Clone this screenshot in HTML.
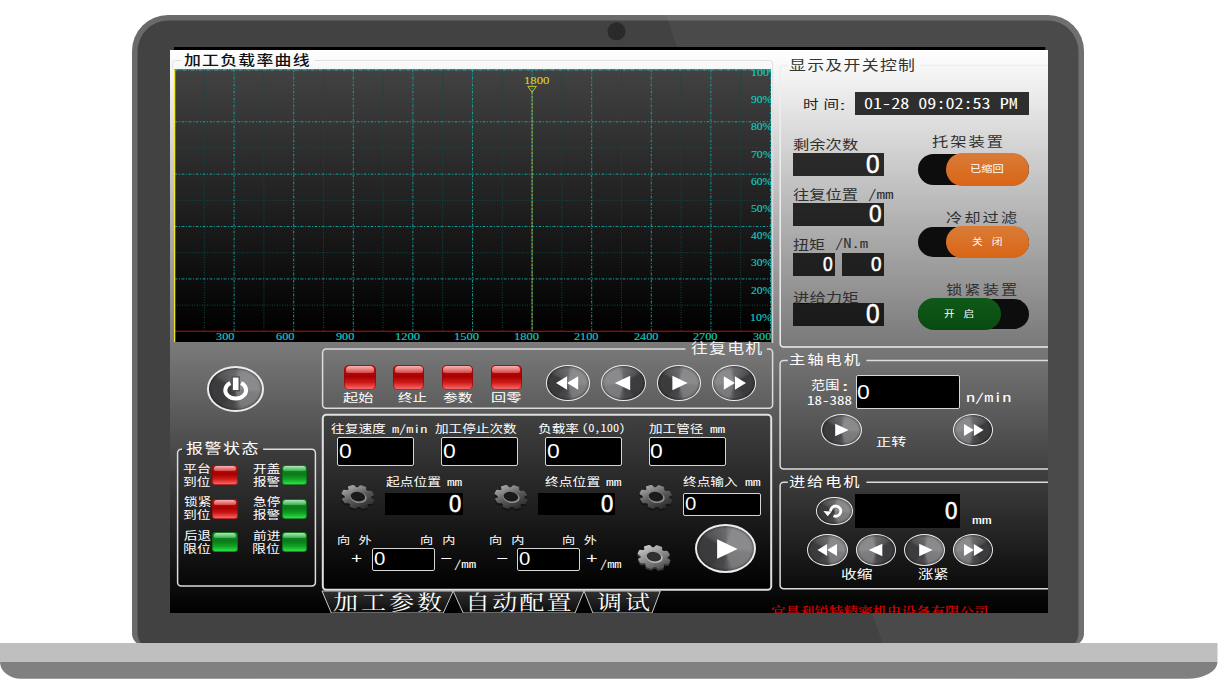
<!DOCTYPE html>
<html lang="zh-CN"><head><meta charset="utf-8"><title>加工负载率曲线 - 控制面板</title>
<style>
html,body{margin:0;padding:0;background:#fff;}
body{width:1218px;height:680px;position:relative;overflow:hidden;font-family:"Liberation Sans","Noto Sans CJK SC",sans-serif;}
.b{position:absolute;box-sizing:border-box;}
.t{position:absolute;white-space:pre;transform-origin:0 50%;}
#laptop{position:absolute;left:0;top:0;}
#screen{position:absolute;left:170px;top:50px;width:878px;height:562.5px;overflow:hidden;background:linear-gradient(#fff,#000);}
#in{position:absolute;left:-170px;top:-50px;width:1218px;height:680px;}
.grp{border:1.5px solid #dcdcdc;border-radius:4px;}
.inp{background:#000;border:1.8px solid #d6d6d6;border-radius:2px;}
.lcd{background:#000;}
.led{border-radius:5px;}
.red{background:linear-gradient(#cf2020 0,#b40606 30%,#a80000 46%,#cc1a1a 70%,#fa6464 95%,#e84848 100%);box-shadow:inset 0 0 0 0.8px rgba(140,10,10,.8);}
.grn{background:linear-gradient(#1f9a30 0,#0c8420 30%,#0a7a18 46%,#12a426 72%,#2ee048 95%,#22c03a 100%);box-shadow:inset 0 0 0 0.8px rgba(10,90,20,.8);}
.led:before{content:"";position:absolute;left:1.5px;right:1.5px;top:1px;height:25%;border-radius:4px 4px 2px 2px;}
.red:before{background:linear-gradient(rgba(255,205,205,.85),rgba(255,160,160,.42));}
.grn:before{background:linear-gradient(rgba(205,255,215,.8),rgba(150,240,170,.35));}
.rb{border-radius:50%;border:2px solid #ececec;}
.rbR{background:conic-gradient(from 0deg,#69696b 0deg,#7c7c7e 10deg,#8a8a8c 22deg,#8b8b8d 90deg,#7e7e80 102deg,#79797b 160deg,#5a5a5c 174deg,#48484a 188deg,#444446 212deg,#3b3b3d 224deg,#3c3c3e 296deg,#525254 308deg,#5e5e60 330deg,#69696b 360deg);box-shadow:inset 0 0 2.5px 0.5px rgba(0,0,0,.55);}
.rbL{background:conic-gradient(from 0deg,#69696b 0deg,#5e5e60 30deg,#525254 52deg,#3c3c3e 64deg,#3b3b3d 136deg,#444446 148deg,#48484a 172deg,#5a5a5c 186deg,#79797b 200deg,#7e7e80 258deg,#8b8b8d 270deg,#8a8a8c 338deg,#7c7c7e 350deg,#69696b 360deg);box-shadow:inset 0 0 2.5px 0.5px rgba(0,0,0,.55);}
.tog{border-radius:17px;background:#0d0d0d;}
.knob{border-radius:17px;}
svg{position:absolute;overflow:visible;}
</style></head><body>

<svg id="laptop" width="1218" height="680" viewBox="0 0 1218 680">
<defs><clipPath id="lidclip"><path d="M132 633.500V51a36 36 0 0 1 36-36h880a36 36 0 0 1 36 36V633.500a12 12 0 0 1-12 12H144a12 12 0 0 1-12-12z"/></clipPath></defs>
<path d="M132 633.500V51a36 36 0 0 1 36-36h880a36 36 0 0 1 36 36V633.500a12 12 0 0 1-12 12H144a12 12 0 0 1-12-12z" fill="#6a6a6a"/>
<path d="M137.500 633.500V51.500a31 31 0 0 1 31-31h879a31 31 0 0 1 31 31V633.500a9 12 0 0 1-9 12H146.500a9 12 0 0 1-9-12z" fill="#424242"/>
<path d="M665.900 15L885.500 652H1090V0H665z" fill="#ffffff" fill-opacity="0.045" clip-path="url(#lidclip)"/>
<circle cx="616.5" cy="31.300" r="9" fill="#2a2a2a"/>
<rect x="174" y="47" width="871.300" height="4" fill="#000"/>
<path d="M0 643H1217.500V662H0z" fill="#bfbfbf"/>
<path d="M0 662H1217.500a30 16.700 0 0 1-30 16.700H21a21 16.700 0 0 1-21-16.700z" fill="#808080"/>
</svg>

<div id="screen"><div id="in">
<svg width="1218" height="680" viewBox="0 0 1218 680" style="left:0;top:0"><path d="M315 60.5H769.7A3 3 0 0 1 772.700 63.5V343M172.500 69V63.500A3 3 0 0 1 175.500 60.500H181" fill="none" stroke="#dde1e4" stroke-width="1"/></svg>
<svg width="1218" height="680" viewBox="0 0 1218 680" style="left:0;top:0"><defs><linearGradient id="cg" x1="0" y1="0" x2="0" y2="1"><stop offset="0" stop-color="#424242"/><stop offset="1" stop-color="#000"/></linearGradient><clipPath id="cc"><rect x="174.5" y="69.5" width="596.5" height="272.5"/></clipPath></defs><rect x="174" y="69.5" width="597.0" height="272.5" fill="#000"/><rect x="174" y="69.5" width="597.0" height="261.8" fill="url(#cg)"/><g clip-path="url(#cc)" fill="none" shape-rendering="auto"><path d="M204.30 69.5V331.3" stroke="#0a4c4c" stroke-width="1" stroke-dasharray="1 1.5"/><path d="M263.90 69.5V331.3" stroke="#0a4c4c" stroke-width="1" stroke-dasharray="1 1.5"/><path d="M323.50 69.5V331.3" stroke="#0a4c4c" stroke-width="1" stroke-dasharray="1 1.5"/><path d="M383.10 69.5V331.3" stroke="#0a4c4c" stroke-width="1" stroke-dasharray="1 1.5"/><path d="M442.70 69.5V331.3" stroke="#0a4c4c" stroke-width="1" stroke-dasharray="1 1.5"/><path d="M502.30 69.5V331.3" stroke="#0a4c4c" stroke-width="1" stroke-dasharray="1 1.5"/><path d="M561.90 69.5V331.3" stroke="#0a4c4c" stroke-width="1" stroke-dasharray="1 1.5"/><path d="M621.50 69.5V331.3" stroke="#0a4c4c" stroke-width="1" stroke-dasharray="1 1.5"/><path d="M681.10 69.5V331.3" stroke="#0a4c4c" stroke-width="1" stroke-dasharray="1 1.5"/><path d="M740.70 69.5V331.3" stroke="#0a4c4c" stroke-width="1" stroke-dasharray="1 1.5"/><path d="M174.5 305.11H771.0" stroke="#0a4c4c" stroke-width="1" stroke-dasharray="1 1.5"/><path d="M174.5 252.73H771.0" stroke="#0a4c4c" stroke-width="1" stroke-dasharray="1 1.5"/><path d="M174.5 200.35H771.0" stroke="#0a4c4c" stroke-width="1" stroke-dasharray="1 1.5"/><path d="M174.5 147.97H771.0" stroke="#0a4c4c" stroke-width="1" stroke-dasharray="1 1.5"/><path d="M174.5 95.59H771.0" stroke="#0a4c4c" stroke-width="1" stroke-dasharray="1 1.5"/><path d="M234.10 69.5V333.8" stroke="#15a6a6" stroke-width="0.9" stroke-dasharray="3 1.5 1 1.5"/><path d="M293.70 69.5V333.8" stroke="#15a6a6" stroke-width="0.9" stroke-dasharray="3 1.5 1 1.5"/><path d="M353.30 69.5V333.8" stroke="#15a6a6" stroke-width="0.9" stroke-dasharray="3 1.5 1 1.5"/><path d="M412.90 69.5V333.8" stroke="#15a6a6" stroke-width="0.9" stroke-dasharray="3 1.5 1 1.5"/><path d="M472.50 69.5V333.8" stroke="#15a6a6" stroke-width="0.9" stroke-dasharray="3 1.5 1 1.5"/><path d="M532.10 69.5V333.8" stroke="#15a6a6" stroke-width="0.9" stroke-dasharray="3 1.5 1 1.5"/><path d="M591.70 69.5V333.8" stroke="#15a6a6" stroke-width="0.9" stroke-dasharray="3 1.5 1 1.5"/><path d="M651.30 69.5V333.8" stroke="#15a6a6" stroke-width="0.9" stroke-dasharray="3 1.5 1 1.5"/><path d="M710.90 69.5V333.8" stroke="#15a6a6" stroke-width="0.9" stroke-dasharray="3 1.5 1 1.5"/><path d="M770.50 69.5V333.8" stroke="#15a6a6" stroke-width="0.9" stroke-dasharray="3 1.5 1 1.5"/><path d="M174.5 278.92H771.0" stroke="#15a6a6" stroke-width="0.9" stroke-dasharray="3 1.5 1 1.5"/><path d="M174.5 226.54H771.0" stroke="#15a6a6" stroke-width="0.9" stroke-dasharray="3 1.5 1 1.5"/><path d="M174.5 174.16H771.0" stroke="#15a6a6" stroke-width="0.9" stroke-dasharray="3 1.5 1 1.5"/><path d="M174.5 121.78H771.0" stroke="#15a6a6" stroke-width="0.9" stroke-dasharray="3 1.5 1 1.5"/><path d="M174.5 69.40H771.0" stroke="#15a6a6" stroke-width="0.9" stroke-dasharray="3 1.5 1 1.5"/><path d="M174.5 69.8H771.0" stroke="#35e0e0" stroke-width="1" stroke-dasharray="4 1.5 1 1.5"/><path d="M532.10 92.5V331.3" stroke="#bcc630" stroke-width="1" stroke-dasharray="2 1.5"/><path d="M527.80 86.4H536.40L532.10 92.2z" stroke="#d8d020" stroke-width="0.9"/><path d="M174.5 331.3H771.0" stroke="#c60c0c" stroke-width="1.1"/></g><path d="M174.65 69.5V342.0" stroke="#f0e828" stroke-width="1.3"/></svg>
<div class="b" style="left:174.5px;top:69.5px;width:596.5px;height:272.5px;overflow:hidden"><div class="b" style="left:-174.5px;top:-69.5px;width:1218px;height:680px">
<div class="t" style="left:216.34px;top:330.54px;font:400 10px/12px 'Liberation Serif','Noto Serif CJK SC',serif;color:#10cfc0;transform:scaleX(1.228);-webkit-text-stroke:0.12px #10cfc0;">300</div>
<div class="t" style="left:275.94px;top:330.54px;font:400 10px/12px 'Liberation Serif','Noto Serif CJK SC',serif;color:#10cfc0;transform:scaleX(1.228);-webkit-text-stroke:0.12px #10cfc0;">600</div>
<div class="t" style="left:335.70px;top:330.54px;font:400 10px/12px 'Liberation Serif','Noto Serif CJK SC',serif;color:#10cfc0;transform:scaleX(1.217);-webkit-text-stroke:0.12px #10cfc0;">900</div>
<div class="t" style="left:394.50px;top:330.54px;font:400 10px/12px 'Liberation Serif','Noto Serif CJK SC',serif;color:#10cfc0;transform:scaleX(1.253);-webkit-text-stroke:0.12px #10cfc0;">1200</div>
<div class="t" style="left:454.10px;top:330.54px;font:400 10px/12px 'Liberation Serif','Noto Serif CJK SC',serif;color:#10cfc0;transform:scaleX(1.253);-webkit-text-stroke:0.12px #10cfc0;">1500</div>
<div class="t" style="left:513.70px;top:330.54px;font:400 10px/12px 'Liberation Serif','Noto Serif CJK SC',serif;color:#10cfc0;transform:scaleX(1.253);-webkit-text-stroke:0.12px #10cfc0;">1800</div>
<div class="t" style="left:573.94px;top:330.54px;font:400 10px/12px 'Liberation Serif','Noto Serif CJK SC',serif;color:#10cfc0;transform:scaleX(1.221);-webkit-text-stroke:0.12px #10cfc0;">2100</div>
<div class="t" style="left:633.54px;top:330.54px;font:400 10px/12px 'Liberation Serif','Noto Serif CJK SC',serif;color:#10cfc0;transform:scaleX(1.221);-webkit-text-stroke:0.12px #10cfc0;">2400</div>
<div class="t" style="left:693.14px;top:330.54px;font:400 10px/12px 'Liberation Serif','Noto Serif CJK SC',serif;color:#10cfc0;transform:scaleX(1.221);-webkit-text-stroke:0.12px #10cfc0;">2700</div>
<div class="t" style="left:752.74px;top:330.54px;font:400 10px/12px 'Liberation Serif','Noto Serif CJK SC',serif;color:#10cfc0;transform:scaleX(1.221);-webkit-text-stroke:0.12px #10cfc0;">3000</div>
<div class="t" style="left:750.26px;top:311.67px;font:400 10px/12px 'Liberation Serif','Noto Serif CJK SC',serif;color:#10cfc0;transform:scaleX(1.191);-webkit-text-stroke:0.12px #10cfc0;">10%</div>
<div class="t" style="left:750.87px;top:284.50px;font:400 10px/12px 'Liberation Serif','Noto Serif CJK SC',serif;color:#10cfc0;transform:scaleX(1.157);-webkit-text-stroke:0.12px #10cfc0;">20%</div>
<div class="t" style="left:750.87px;top:257.33px;font:400 10px/12px 'Liberation Serif','Noto Serif CJK SC',serif;color:#10cfc0;transform:scaleX(1.157);-webkit-text-stroke:0.12px #10cfc0;">30%</div>
<div class="t" style="left:751.16px;top:230.16px;font:400 10px/12px 'Liberation Serif','Noto Serif CJK SC',serif;color:#10cfc0;transform:scaleX(1.141);-webkit-text-stroke:0.12px #10cfc0;">40%</div>
<div class="t" style="left:750.72px;top:202.99px;font:400 10px/12px 'Liberation Serif','Noto Serif CJK SC',serif;color:#10cfc0;transform:scaleX(1.166);-webkit-text-stroke:0.12px #10cfc0;">50%</div>
<div class="t" style="left:750.87px;top:175.82px;font:400 10px/12px 'Liberation Serif','Noto Serif CJK SC',serif;color:#10cfc0;transform:scaleX(1.157);-webkit-text-stroke:0.12px #10cfc0;">60%</div>
<div class="t" style="left:750.57px;top:148.65px;font:400 10px/12px 'Liberation Serif','Noto Serif CJK SC',serif;color:#10cfc0;transform:scaleX(1.174);-webkit-text-stroke:0.12px #10cfc0;">70%</div>
<div class="t" style="left:750.87px;top:121.48px;font:400 10px/12px 'Liberation Serif','Noto Serif CJK SC',serif;color:#10cfc0;transform:scaleX(1.157);-webkit-text-stroke:0.12px #10cfc0;">80%</div>
<div class="t" style="left:751.01px;top:94.31px;font:400 10px/12px 'Liberation Serif','Noto Serif CJK SC',serif;color:#10cfc0;transform:scaleX(1.149);-webkit-text-stroke:0.12px #10cfc0;">90%</div>
<div class="t" style="left:750.95px;top:67.14px;font:400 10px/12px 'Liberation Serif','Noto Serif CJK SC',serif;color:#10cfc0;transform:scaleX(1.202);-webkit-text-stroke:0.12px #10cfc0;">100%</div>
<div class="t" style="left:523.54px;top:74.24px;font:400 10.5px/13px 'Liberation Serif','Noto Serif CJK SC',serif;color:#d8d020;transform:scaleX(1.210);-webkit-text-stroke:0.12px #d8d020;">1800</div>
</div></div>
<div class="t" style="left:184.19px;top:52.50px;font:500 13.5px/16px 'Liberation Sans','Noto Sans CJK SC',sans-serif;color:#111;transform:scaleX(1.250);letter-spacing:0.99px;">加工负载率曲线</div>
<svg width="1218" height="680" viewBox="0 0 1218 680" style="left:0;top:0"><path d="M920 65.5H1058.5A3.5 3.5 0 0 1 1062 69.0V343.5A3.5 3.5 0 0 1 1058.5 347H783.7A3.5 3.5 0 0 1 780.2 343.5V69.0A3.5 3.5 0 0 1 783.7 65.5H787" fill="none" stroke="#eeeeee" stroke-width="1.5"/></svg>
<div class="t" style="left:788.88px;top:58.06px;font:400 13.5px/16px 'Liberation Sans','Noto Sans CJK SC',sans-serif;color:#333;transform:scaleX(1.250);letter-spacing:1.05px;">显示及开关控制</div>
<div class="t" style="left:802.65px;top:98.36px;font:400 12.5px/15px 'Liberation Sans','Noto Sans CJK SC',sans-serif;color:#222;transform:scaleX(1.250);letter-spacing:3.80px;">时间</div>
<div class="t" style="left:838.99px;top:98.04px;font:400 13px/16px 'Liberation Sans','Noto Sans CJK SC',sans-serif;color:#222;transform:scaleX(1.964);">:</div>
<div class="b " style="left:855.00px;top:92.00px;width:174.00px;height:22.50px;background:rgba(0,0,0,0.8);"></div>
<div class="t hw" style="left:863.87px;top:93.69px;font:400 14.5px/17px 'Noto Sans CJK SC','Liberation Mono',monospace;font-feature-settings:'hwid';color:#fff;transform:scaleX(1.248);">01-28 09:02:53 PM</div>
<div class="t" style="left:793.12px;top:136.94px;font:400 13px/16px 'Liberation Sans','Noto Sans CJK SC',sans-serif;color:#2f2f2f;transform:scaleX(1.254);">剩余次数</div>
<div class="t" style="left:793.28px;top:187.09px;font:400 13px/16px 'Liberation Sans','Noto Sans CJK SC',sans-serif;color:#2f2f2f;transform:scaleX(1.250);">往复位置</div>
<div class="t hw" style="left:867.66px;top:186.19px;font:400 12.5px/15px 'Noto Sans CJK SC','Liberation Mono',monospace;font-feature-settings:'hwid';color:#2f2f2f;transform:scaleX(1.357);">/mm</div>
<div class="t" style="left:793.29px;top:236.80px;font:400 13px/16px 'Liberation Sans','Noto Sans CJK SC',sans-serif;color:#2f2f2f;transform:scaleX(1.230);">扭矩</div>
<div class="t hw" style="left:834.92px;top:235.44px;font:400 12.5px/15px 'Noto Sans CJK SC','Liberation Mono',monospace;font-feature-settings:'hwid';color:#2f2f2f;transform:scaleX(1.326);">/N.m</div>
<div class="t" style="left:793.28px;top:290.38px;font:400 13px/16px 'Liberation Sans','Noto Sans CJK SC',sans-serif;color:#2f2f2f;transform:scaleX(1.260);">进给力矩</div>
<div class="t" style="left:931.73px;top:134.45px;font:400 13px/16px 'Liberation Sans','Noto Sans CJK SC',sans-serif;color:#2f2f2f;transform:scaleX(1.250);letter-spacing:1.61px;">托架装置</div>
<div class="t" style="left:945.78px;top:209.53px;font:400 13px/16px 'Liberation Sans','Noto Sans CJK SC',sans-serif;color:#2f2f2f;transform:scaleX(1.250);letter-spacing:1.58px;">冷却过滤</div>
<div class="t" style="left:945.78px;top:281.50px;font:400 13px/16px 'Liberation Sans','Noto Sans CJK SC',sans-serif;color:#2f2f2f;transform:scaleX(1.250);letter-spacing:1.67px;">锁紧装置</div>
<div class="b " style="left:793.00px;top:153.00px;width:91.00px;height:22.60px;background:rgba(0,0,0,0.8);"></div>
<div class="t" style="left:866.23px;top:148.24px;font:400 26.5px/32px 'Liberation Sans','Noto Sans CJK SC',sans-serif;color:#fff;transform:scaleX(0.918);-webkit-text-stroke:0.55px #fff;">0</div>
<div class="b " style="left:793.00px;top:203.00px;width:91.00px;height:22.60px;background:rgba(0,0,0,0.8);"></div>
<div class="t" style="left:869.42px;top:199.14px;font:400 24.0px/29px 'Liberation Sans','Noto Sans CJK SC',sans-serif;color:#fff;transform:scaleX(0.946);-webkit-text-stroke:0.55px #fff;">0</div>
<div class="b " style="left:793.00px;top:253.00px;width:42.00px;height:22.60px;background:rgba(0,0,0,0.8);"></div>
<div class="t" style="left:823.31px;top:251.24px;font:400 20.5px/25px 'Liberation Sans','Noto Sans CJK SC',sans-serif;color:#fff;transform:scaleX(0.851);-webkit-text-stroke:0.55px #fff;">0</div>
<div class="b " style="left:841.50px;top:253.00px;width:42.50px;height:22.60px;background:rgba(0,0,0,0.8);"></div>
<div class="t" style="left:870.76px;top:251.24px;font:400 20.5px/25px 'Liberation Sans','Noto Sans CJK SC',sans-serif;color:#fff;transform:scaleX(0.922);-webkit-text-stroke:0.55px #fff;">0</div>
<div class="b " style="left:793.00px;top:302.50px;width:91.00px;height:23.10px;background:rgba(0,0,0,0.8);"></div>
<div class="t" style="left:866.35px;top:298.31px;font:400 27.0px/32px 'Liberation Sans','Noto Sans CJK SC',sans-serif;color:#fff;transform:scaleX(0.904);-webkit-text-stroke:0.55px #fff;">0</div>
<div class="b tog" style="left:917.70px;top:154.00px;width:111.00px;height:31.00px;"></div>
<div class="b knob" style="left:945.80px;top:153.00px;width:82.90px;height:33.00px;background:linear-gradient(#d97c38,#d96516);"></div>
<div class="t" style="left:969.62px;top:164.32px;font:400 8.6px/10px 'Liberation Sans','Noto Sans CJK SC',sans-serif;color:#fff;transform:scaleX(1.309);">已缩回</div>
<div class="b tog" style="left:917.70px;top:226.50px;width:111.00px;height:30.80px;"></div>
<div class="b knob" style="left:945.80px;top:225.50px;width:82.90px;height:32.80px;background:linear-gradient(#d97c38,#d96516);"></div>
<div class="t" style="left:971.53px;top:237.00px;font:400 8.6px/10px 'Liberation Sans','Noto Sans CJK SC',sans-serif;color:#fff;transform:scaleX(1.250);word-spacing:4.91px;">关 闭</div>
<div class="b tog" style="left:917.70px;top:298.50px;width:111.00px;height:30.80px;"></div>
<div class="b knob" style="left:917.70px;top:297.50px;width:83.30px;height:32.80px;background:linear-gradient(#0e5a18,#0a4a12);"></div>
<div class="t" style="left:944.03px;top:309.12px;font:400 8.6px/10px 'Liberation Sans','Noto Sans CJK SC',sans-serif;color:#fff;transform:scaleX(1.250);word-spacing:4.64px;">开 启</div>
<div class="b rb rbR" style="left:207.10px;top:366.40px;width:57.00px;height:45.40px;border-width:2.2px;"><svg width="40.00" height="30.00" viewBox="-20.00 -15.00 40.00 30.00" style="left:50%;top:50%;margin-left:-20.00px;margin-top:-15.00px"><g transform="translate(-0.3,1.1)"><path d="M-5.4 -7.1A10.4 8.4 0 1 0 5.4 -7.1" fill="none" stroke="#fff" stroke-width="4" transform="scale(1,1)"/><rect x="-3.5" y="-13.2" width="7" height="13.8" fill="#fff" stroke="#505052" stroke-width="1.4"/></g></svg></div>
<svg width="1218" height="680" viewBox="0 0 1218 680" style="left:0;top:0"><path d="M766.8 349H769.1A3.5 3.5 0 0 1 772.6 352.5V404.8A3.5 3.5 0 0 1 769.1 408.3H326.1A3.5 3.5 0 0 1 322.6 404.8V352.5A3.5 3.5 0 0 1 326.1 349H685.4" fill="none" stroke="#dcdcdc" stroke-width="1.5"/></svg>
<div class="t" style="left:690.73px;top:341.24px;font:400 13.5px/16px 'Liberation Sans','Noto Sans CJK SC',sans-serif;color:#f4f4f4;transform:scaleX(1.250);letter-spacing:0.98px;">往复电机</div>
<div class="b led red" style="left:344.40px;top:365.30px;width:31.30px;height:25.00px;"></div>
<div class="t" style="left:342.67px;top:390.91px;font:400 11.5px/14px 'Liberation Sans','Noto Sans CJK SC',sans-serif;color:#fff;transform:scaleX(1.316);">起始</div>
<div class="b led red" style="left:393.10px;top:365.30px;width:31.30px;height:25.00px;"></div>
<div class="t" style="left:398.29px;top:390.98px;font:400 11.5px/14px 'Liberation Sans','Noto Sans CJK SC',sans-serif;color:#fff;transform:scaleX(1.258);">终止</div>
<div class="b led red" style="left:441.80px;top:365.30px;width:31.30px;height:25.00px;"></div>
<div class="t" style="left:443.12px;top:390.98px;font:400 11.5px/14px 'Liberation Sans','Noto Sans CJK SC',sans-serif;color:#fff;transform:scaleX(1.287);">参数</div>
<div class="b led red" style="left:490.50px;top:365.30px;width:31.30px;height:25.00px;"></div>
<div class="t" style="left:491.45px;top:390.66px;font:400 11.5px/14px 'Liberation Sans','Noto Sans CJK SC',sans-serif;color:#fff;transform:scaleX(1.317);">回零</div>
<div class="b rb rbR" style="left:545.70px;top:365.40px;width:44.60px;height:35.60px;border-width:1.9px;"><svg width="40.00" height="30.00" viewBox="-20.00 -15.00 40.00 30.00" style="left:50%;top:50%;margin-left:-20.00px;margin-top:-15.00px"><path d="M10.20 -6.70L-0.90 0L10.20 6.70z" fill="#fff"/><path d="M-0.90 -6.70L-12.00 0L-0.90 6.70z" fill="#fff"/></svg></div>
<div class="b rb rbL" style="left:601.10px;top:365.40px;width:44.60px;height:35.60px;border-width:1.9px;"><svg width="40.00" height="30.00" viewBox="-20.00 -15.00 40.00 30.00" style="left:50%;top:50%;margin-left:-20.00px;margin-top:-15.00px"><path d="M7.20 -7.20L-8.20 0L7.20 7.20z" fill="#fff"/></svg></div>
<div class="b rb rbR" style="left:656.50px;top:365.40px;width:44.60px;height:35.60px;border-width:1.9px;"><svg width="40.00" height="30.00" viewBox="-20.00 -15.00 40.00 30.00" style="left:50%;top:50%;margin-left:-20.00px;margin-top:-15.00px"><path d="M-6.60 -7.20L8.60 0L-6.60 7.20z" fill="#fff"/></svg></div>
<div class="b rb rbL" style="left:711.90px;top:365.40px;width:44.60px;height:35.60px;border-width:1.9px;"><svg width="40.00" height="30.00" viewBox="-20.00 -15.00 40.00 30.00" style="left:50%;top:50%;margin-left:-20.00px;margin-top:-15.00px"><path d="M-10.20 -6.70L0.90 0L-10.20 6.70z" fill="#fff"/><path d="M0.90 -6.70L12.00 0L0.90 6.70z" fill="#fff"/></svg></div>
<div class="b " style="left:322.00px;top:414.00px;width:450.30px;height:176.60px;background:linear-gradient(#414141,#000);border-radius:4px;"></div>
<svg width="1218" height="680" viewBox="0 0 1218 680" style="left:0;top:0"><path d="M326.3 414.8H767.7A3.5 3.5 0 0 1 771.2 418.3V586.3A3.5 3.5 0 0 1 767.7 589.8H326.3A3.5 3.5 0 0 1 322.8 586.3V418.3A3.5 3.5 0 0 1 326.3 414.8z" fill="none" stroke="#e0e0e0" stroke-width="2"/></svg>
<div class="t" style="left:330.69px;top:423.07px;font:400 11px/13px 'Liberation Sans','Noto Sans CJK SC',sans-serif;color:#fff;transform:scaleX(1.245);">往复速度</div>
<div class="t hw" style="left:392.10px;top:421.86px;font:400 11px/13px 'Noto Sans CJK SC','Liberation Mono',monospace;font-feature-settings:'hwid';color:#fff;transform:scaleX(1.287);">m/min</div>
<div class="t" style="left:434.69px;top:423.01px;font:400 11px/13px 'Liberation Sans','Noto Sans CJK SC',sans-serif;color:#fff;transform:scaleX(1.237);">加工停止次数</div>
<div class="t" style="left:538.18px;top:423.27px;font:400 11px/13px 'Liberation Sans','Noto Sans CJK SC',sans-serif;color:#fff;transform:scaleX(1.244);">负载率</div>
<div class="t hw" style="left:582.47px;top:421.46px;font:400 11px/13px 'Noto Sans CJK SC','Liberation Mono',monospace;font-feature-settings:'hwid';color:#fff;transform:scaleX(1.124);">(0,100)</div>
<div class="t" style="left:649.19px;top:423.21px;font:400 11px/13px 'Liberation Sans','Noto Sans CJK SC',sans-serif;color:#fff;transform:scaleX(1.236);">加工管径</div>
<div class="t hw" style="left:710.47px;top:422.45px;font:400 11px/13px 'Noto Sans CJK SC','Liberation Mono',monospace;font-feature-settings:'hwid';color:#fff;transform:scaleX(1.369);">mm</div>
<div class="b inp" style="left:337.00px;top:436.90px;width:77.20px;height:28.70px;"></div>
<div class="t" style="left:338.62px;top:440.09px;font:400 19.5px/23px 'Liberation Sans','Noto Sans CJK SC',sans-serif;color:#fff;transform:scaleX(1.175);">0</div>
<div class="b inp" style="left:441.00px;top:436.90px;width:77.20px;height:28.70px;"></div>
<div class="t" style="left:442.62px;top:440.09px;font:400 19.5px/23px 'Liberation Sans','Noto Sans CJK SC',sans-serif;color:#fff;transform:scaleX(1.175);">0</div>
<div class="b inp" style="left:544.90px;top:436.90px;width:77.10px;height:28.70px;"></div>
<div class="t" style="left:546.52px;top:440.09px;font:400 19.5px/23px 'Liberation Sans','Noto Sans CJK SC',sans-serif;color:#fff;transform:scaleX(1.175);">0</div>
<div class="b inp" style="left:648.80px;top:436.90px;width:77.00px;height:28.70px;"></div>
<div class="t" style="left:650.42px;top:440.09px;font:400 19.5px/23px 'Liberation Sans','Noto Sans CJK SC',sans-serif;color:#fff;transform:scaleX(1.175);">0</div>
<div class="t" style="left:385.69px;top:475.51px;font:400 11px/13px 'Liberation Sans','Noto Sans CJK SC',sans-serif;color:#fff;transform:scaleX(1.249);">起点位置</div>
<div class="t hw" style="left:447.47px;top:474.65px;font:400 11px/13px 'Noto Sans CJK SC','Liberation Mono',monospace;font-feature-settings:'hwid';color:#fff;transform:scaleX(1.369);">mm</div>
<div class="t" style="left:545.09px;top:475.77px;font:400 11px/13px 'Liberation Sans','Noto Sans CJK SC',sans-serif;color:#fff;transform:scaleX(1.255);">终点位置</div>
<div class="t hw" style="left:606.46px;top:474.85px;font:400 11px/13px 'Noto Sans CJK SC','Liberation Mono',monospace;font-feature-settings:'hwid';color:#fff;transform:scaleX(1.398);">mm</div>
<div class="t" style="left:683.39px;top:475.77px;font:400 11px/13px 'Liberation Sans','Noto Sans CJK SC',sans-serif;color:#fff;transform:scaleX(1.243);">终点输入</div>
<div class="t hw" style="left:744.95px;top:474.85px;font:400 11px/13px 'Noto Sans CJK SC','Liberation Mono',monospace;font-feature-settings:'hwid';color:#fff;transform:scaleX(1.417);">mm</div>
<div class="b " style="left:385.40px;top:492.60px;width:77.20px;height:22.60px;background:#000;"></div>
<div class="t" style="left:448.84px;top:489.24px;font:400 24.0px/29px 'Liberation Sans','Noto Sans CJK SC',sans-serif;color:#fff;transform:scaleX(0.920);-webkit-text-stroke:0.55px #fff;">0</div>
<div class="b " style="left:538.00px;top:492.80px;width:76.80px;height:22.40px;background:#000;"></div>
<div class="t" style="left:601.04px;top:489.24px;font:400 24.0px/29px 'Liberation Sans','Noto Sans CJK SC',sans-serif;color:#fff;transform:scaleX(0.920);-webkit-text-stroke:0.55px #fff;">0</div>
<div class="b inp" style="left:683.20px;top:492.80px;width:77.40px;height:22.90px;"></div>
<div class="t" style="left:685.07px;top:494.15px;font:400 17.5px/21px 'Liberation Sans','Noto Sans CJK SC',sans-serif;color:#fff;transform:scaleX(1.163);">0</div>
<div class="t" style="left:336.75px;top:533.98px;font:400 10.5px/13px 'Liberation Sans','Noto Sans CJK SC',sans-serif;color:#fff;transform:scaleX(1.250);word-spacing:3.73px;">向 外</div>
<div class="t" style="left:419.75px;top:533.98px;font:400 10.5px/13px 'Liberation Sans','Noto Sans CJK SC',sans-serif;color:#fff;transform:scaleX(1.250);word-spacing:4.48px;">向 内</div>
<div class="t" style="left:489.35px;top:533.98px;font:400 10.5px/13px 'Liberation Sans','Noto Sans CJK SC',sans-serif;color:#fff;transform:scaleX(1.250);word-spacing:4.48px;">向 内</div>
<div class="t" style="left:561.95px;top:533.98px;font:400 10.5px/13px 'Liberation Sans','Noto Sans CJK SC',sans-serif;color:#fff;transform:scaleX(1.250);word-spacing:4.05px;">向 外</div>
<div class="t" style="left:350.75px;top:550.38px;font:400 14px/17px 'Liberation Sans','Noto Sans CJK SC',sans-serif;color:#fff;transform:scaleX(1.367);">+</div>
<div class="t" style="left:440.49px;top:550.38px;font:400 14px/17px 'Liberation Sans','Noto Sans CJK SC',sans-serif;color:#fff;transform:scaleX(1.455);">−</div>
<div class="t" style="left:495.69px;top:550.38px;font:400 14px/17px 'Liberation Sans','Noto Sans CJK SC',sans-serif;color:#fff;transform:scaleX(1.455);">−</div>
<div class="t" style="left:585.91px;top:550.38px;font:400 14px/17px 'Liberation Sans','Noto Sans CJK SC',sans-serif;color:#fff;transform:scaleX(1.425);">+</div>
<div class="t hw" style="left:454.49px;top:557.39px;font:400 10.5px/13px 'Noto Sans CJK SC','Liberation Mono',monospace;font-feature-settings:'hwid';color:#fff;transform:scaleX(1.399);">/mm</div>
<div class="t hw" style="left:600.30px;top:557.39px;font:400 10.5px/13px 'Noto Sans CJK SC','Liberation Mono',monospace;font-feature-settings:'hwid';color:#fff;transform:scaleX(1.365);">/mm</div>
<div class="b inp" style="left:372.00px;top:548.00px;width:63.20px;height:23.00px;"></div>
<div class="t" style="left:373.87px;top:549.40px;font:400 17.5px/21px 'Liberation Sans','Noto Sans CJK SC',sans-serif;color:#fff;transform:scaleX(1.163);">0</div>
<div class="b inp" style="left:517.00px;top:548.00px;width:63.20px;height:23.00px;"></div>
<div class="t" style="left:518.87px;top:549.40px;font:400 17.5px/21px 'Liberation Sans','Noto Sans CJK SC',sans-serif;color:#fff;transform:scaleX(1.163);">0</div>
<div class="b rb rbR" style="left:694.60px;top:524.00px;width:61.20px;height:49.00px;border-width:2.4px;"><svg width="40.00" height="30.00" viewBox="-20.00 -15.00 40.00 30.00" style="left:50%;top:50%;margin-left:-20.00px;margin-top:-15.00px"><path d="M-7.90 -9.80L12.60 0L-7.90 9.80z" fill="#fff"/></svg></div>
<svg width="40" height="32" viewBox="-20 -16 40 32" style="left:338.30px;top:481.30px"><defs><linearGradient id="gg358497" gradientUnits="userSpaceOnUse" x1="-13" y1="-13" x2="12" y2="14"><stop offset="0" stop-color="#b0b0b0"/><stop offset="0.5" stop-color="#5a5a5a"/><stop offset="1" stop-color="#262626"/></linearGradient></defs><g transform="rotate(10) scale(1,0.72)"><path d="M15.58 0.78L14.65 5.35L11.06 5.62L9.36 8.13L10.47 11.57L6.58 14.14L3.85 11.79L0.87 12.37L-0.78 15.58L-5.35 14.65L-5.62 11.06L-8.13 9.36L-11.57 10.47L-14.14 6.58L-11.79 3.85L-12.37 0.87L-15.58 -0.78L-14.65 -5.35L-11.06 -5.62L-9.36 -8.13L-10.47 -11.57L-6.58 -14.14L-3.85 -11.79L-0.87 -12.37L0.78 -15.58L5.35 -14.65L5.62 -11.06L8.13 -9.36L11.57 -10.47L14.14 -6.58L11.79 -3.85L12.37 -0.87z" transform="translate(0,2.6)" fill="#141414" stroke="#141414" stroke-width="2.4" stroke-linejoin="round"/><path d="M15.58 0.78L14.65 5.35L11.06 5.62L9.36 8.13L10.47 11.57L6.58 14.14L3.85 11.79L0.87 12.37L-0.78 15.58L-5.35 14.65L-5.62 11.06L-8.13 9.36L-11.57 10.47L-14.14 6.58L-11.79 3.85L-12.37 0.87L-15.58 -0.78L-14.65 -5.35L-11.06 -5.62L-9.36 -8.13L-10.47 -11.57L-6.58 -14.14L-3.85 -11.79L-0.87 -12.37L0.78 -15.58L5.35 -14.65L5.62 -11.06L8.13 -9.36L11.57 -10.47L14.14 -6.58L11.79 -3.85L12.37 -0.87z" fill="url(#gg358497)" stroke="url(#gg358497)" stroke-width="2.4" stroke-linejoin="round"/><ellipse cx="0.5" cy="0.5" rx="8.3" ry="7.7" fill="#8e8e8e"/><ellipse cx="-0.2" cy="-0.5" rx="7.3" ry="6.5" fill="#1a1a1a"/></g></svg>
<svg width="40" height="32" viewBox="-20 -16 40 32" style="left:490.70px;top:481.30px"><defs><linearGradient id="gg510497" gradientUnits="userSpaceOnUse" x1="-13" y1="-13" x2="12" y2="14"><stop offset="0" stop-color="#b0b0b0"/><stop offset="0.5" stop-color="#5a5a5a"/><stop offset="1" stop-color="#262626"/></linearGradient></defs><g transform="rotate(10) scale(1,0.72)"><path d="M15.58 0.78L14.65 5.35L11.06 5.62L9.36 8.13L10.47 11.57L6.58 14.14L3.85 11.79L0.87 12.37L-0.78 15.58L-5.35 14.65L-5.62 11.06L-8.13 9.36L-11.57 10.47L-14.14 6.58L-11.79 3.85L-12.37 0.87L-15.58 -0.78L-14.65 -5.35L-11.06 -5.62L-9.36 -8.13L-10.47 -11.57L-6.58 -14.14L-3.85 -11.79L-0.87 -12.37L0.78 -15.58L5.35 -14.65L5.62 -11.06L8.13 -9.36L11.57 -10.47L14.14 -6.58L11.79 -3.85L12.37 -0.87z" transform="translate(0,2.6)" fill="#141414" stroke="#141414" stroke-width="2.4" stroke-linejoin="round"/><path d="M15.58 0.78L14.65 5.35L11.06 5.62L9.36 8.13L10.47 11.57L6.58 14.14L3.85 11.79L0.87 12.37L-0.78 15.58L-5.35 14.65L-5.62 11.06L-8.13 9.36L-11.57 10.47L-14.14 6.58L-11.79 3.85L-12.37 0.87L-15.58 -0.78L-14.65 -5.35L-11.06 -5.62L-9.36 -8.13L-10.47 -11.57L-6.58 -14.14L-3.85 -11.79L-0.87 -12.37L0.78 -15.58L5.35 -14.65L5.62 -11.06L8.13 -9.36L11.57 -10.47L14.14 -6.58L11.79 -3.85L12.37 -0.87z" fill="url(#gg510497)" stroke="url(#gg510497)" stroke-width="2.4" stroke-linejoin="round"/><ellipse cx="0.5" cy="0.5" rx="8.3" ry="7.7" fill="#8e8e8e"/><ellipse cx="-0.2" cy="-0.5" rx="7.3" ry="6.5" fill="#1a1a1a"/></g></svg>
<svg width="40" height="32" viewBox="-20 -16 40 32" style="left:635.90px;top:481.20px"><defs><linearGradient id="gg655497" gradientUnits="userSpaceOnUse" x1="-13" y1="-13" x2="12" y2="14"><stop offset="0" stop-color="#b0b0b0"/><stop offset="0.5" stop-color="#5a5a5a"/><stop offset="1" stop-color="#262626"/></linearGradient></defs><g transform="rotate(10) scale(1,0.72)"><path d="M15.58 0.78L14.65 5.35L11.06 5.62L9.36 8.13L10.47 11.57L6.58 14.14L3.85 11.79L0.87 12.37L-0.78 15.58L-5.35 14.65L-5.62 11.06L-8.13 9.36L-11.57 10.47L-14.14 6.58L-11.79 3.85L-12.37 0.87L-15.58 -0.78L-14.65 -5.35L-11.06 -5.62L-9.36 -8.13L-10.47 -11.57L-6.58 -14.14L-3.85 -11.79L-0.87 -12.37L0.78 -15.58L5.35 -14.65L5.62 -11.06L8.13 -9.36L11.57 -10.47L14.14 -6.58L11.79 -3.85L12.37 -0.87z" transform="translate(0,2.6)" fill="#141414" stroke="#141414" stroke-width="2.4" stroke-linejoin="round"/><path d="M15.58 0.78L14.65 5.35L11.06 5.62L9.36 8.13L10.47 11.57L6.58 14.14L3.85 11.79L0.87 12.37L-0.78 15.58L-5.35 14.65L-5.62 11.06L-8.13 9.36L-11.57 10.47L-14.14 6.58L-11.79 3.85L-12.37 0.87L-15.58 -0.78L-14.65 -5.35L-11.06 -5.62L-9.36 -8.13L-10.47 -11.57L-6.58 -14.14L-3.85 -11.79L-0.87 -12.37L0.78 -15.58L5.35 -14.65L5.62 -11.06L8.13 -9.36L11.57 -10.47L14.14 -6.58L11.79 -3.85L12.37 -0.87z" fill="url(#gg655497)" stroke="url(#gg655497)" stroke-width="2.4" stroke-linejoin="round"/><ellipse cx="0.5" cy="0.5" rx="8.3" ry="7.7" fill="#8e8e8e"/><ellipse cx="-0.2" cy="-0.5" rx="7.3" ry="6.5" fill="#1a1a1a"/></g></svg>
<svg width="40" height="32" viewBox="-20 -16 40 32" style="left:633.50px;top:540.60px"><defs><linearGradient id="gg653556" gradientUnits="userSpaceOnUse" x1="-13" y1="-13" x2="12" y2="14"><stop offset="0" stop-color="#cfcfcf"/><stop offset="0.5" stop-color="#8a8a8a"/><stop offset="1" stop-color="#4a4a4a"/></linearGradient></defs><g transform="rotate(10) scale(1,0.72)"><path d="M15.58 0.78L14.65 5.35L11.06 5.62L9.36 8.13L10.47 11.57L6.58 14.14L3.85 11.79L0.87 12.37L-0.78 15.58L-5.35 14.65L-5.62 11.06L-8.13 9.36L-11.57 10.47L-14.14 6.58L-11.79 3.85L-12.37 0.87L-15.58 -0.78L-14.65 -5.35L-11.06 -5.62L-9.36 -8.13L-10.47 -11.57L-6.58 -14.14L-3.85 -11.79L-0.87 -12.37L0.78 -15.58L5.35 -14.65L5.62 -11.06L8.13 -9.36L11.57 -10.47L14.14 -6.58L11.79 -3.85L12.37 -0.87z" transform="translate(0,2.6)" fill="#3a3a3a" stroke="#3a3a3a" stroke-width="2.4" stroke-linejoin="round"/><path d="M15.58 0.78L14.65 5.35L11.06 5.62L9.36 8.13L10.47 11.57L6.58 14.14L3.85 11.79L0.87 12.37L-0.78 15.58L-5.35 14.65L-5.62 11.06L-8.13 9.36L-11.57 10.47L-14.14 6.58L-11.79 3.85L-12.37 0.87L-15.58 -0.78L-14.65 -5.35L-11.06 -5.62L-9.36 -8.13L-10.47 -11.57L-6.58 -14.14L-3.85 -11.79L-0.87 -12.37L0.78 -15.58L5.35 -14.65L5.62 -11.06L8.13 -9.36L11.57 -10.47L14.14 -6.58L11.79 -3.85L12.37 -0.87z" fill="url(#gg653556)" stroke="url(#gg653556)" stroke-width="2.4" stroke-linejoin="round"/><ellipse cx="0.5" cy="0.5" rx="8.3" ry="7.7" fill="#b8b8b8"/><ellipse cx="-0.2" cy="-0.5" rx="7.3" ry="6.5" fill="#303030"/></g></svg>
<svg width="1218" height="680" viewBox="0 0 1218 680" style="left:0;top:0"><defs><linearGradient id="tg" x1="0" y1="0" x2="0" y2="1"><stop offset="0" stop-color="#303030"/><stop offset="1" stop-color="#0c0c0c"/></linearGradient></defs><path d="M322 591L331.3 613H443.3L453.2 591z" fill="url(#tg)" stroke="#c8c8c8" stroke-width="1"/><path d="M453.2 591L463.2 613H575L584 591z" fill="url(#tg)" stroke="#c8c8c8" stroke-width="1"/><path d="M584 591L592.9 613H652L660.3 591z" fill="url(#tg)" stroke="#c8c8c8" stroke-width="1"/></svg>
<div class="t" style="left:332.88px;top:591.08px;font:400 20px/24px 'Liberation Serif','Noto Serif CJK SC',serif;color:#fff;transform:scaleX(1.250);letter-spacing:2.41px;">加工参数</div>
<div class="t" style="left:465.20px;top:591.01px;font:400 20px/24px 'Liberation Serif','Noto Serif CJK SC',serif;color:#fff;transform:scaleX(1.250);letter-spacing:1.72px;">自动配置</div>
<div class="t" style="left:596.67px;top:590.95px;font:400 20px/24px 'Liberation Serif','Noto Serif CJK SC',serif;color:#fff;transform:scaleX(1.250);letter-spacing:2.36px;">调试</div>
<div class="b " style="left:177.00px;top:448.60px;width:139.00px;height:138.00px;background:linear-gradient(#3c3c3c,#060606);border-radius:4px;"></div>
<svg width="1218" height="680" viewBox="0 0 1218 680" style="left:0;top:0"><path d="M263.1 449.2H311.9A3.5 3.5 0 0 1 315.4 452.7V582.5A3.5 3.5 0 0 1 311.9 586H181.1A3.5 3.5 0 0 1 177.6 582.5V452.7A3.5 3.5 0 0 1 181.1 449.2H182" fill="none" stroke="#dcdcdc" stroke-width="1.5"/></svg>
<div class="t" style="left:185.73px;top:440.79px;font:400 13.5px/16px 'Liberation Sans','Noto Sans CJK SC',sans-serif;color:#fff;transform:scaleX(1.250);letter-spacing:1.30px;">报警状态</div>
<div class="t" style="left:183.37px;top:462.88px;font:400 11px/13px 'Liberation Sans','Noto Sans CJK SC',sans-serif;color:#fff;transform:scaleX(1.263);">平台</div>
<div class="t" style="left:183.22px;top:475.57px;font:400 11px/13px 'Liberation Sans','Noto Sans CJK SC',sans-serif;color:#fff;transform:scaleX(1.248);">到位</div>
<div class="b led red" style="left:212.30px;top:465.00px;width:25.50px;height:20.40px;border-radius:4px;"></div>
<div class="t" style="left:252.68px;top:462.81px;font:400 11px/13px 'Liberation Sans','Noto Sans CJK SC',sans-serif;color:#fff;transform:scaleX(1.240);">开盖</div>
<div class="t" style="left:252.99px;top:475.51px;font:400 11px/13px 'Liberation Sans','Noto Sans CJK SC',sans-serif;color:#fff;transform:scaleX(1.226);">报警</div>
<div class="b led grn" style="left:281.50px;top:465.00px;width:25.50px;height:20.40px;border-radius:4px;"></div>
<div class="t" style="left:183.69px;top:496.31px;font:400 11px/13px 'Liberation Sans','Noto Sans CJK SC',sans-serif;color:#fff;transform:scaleX(1.240);">锁紧</div>
<div class="t" style="left:183.22px;top:509.07px;font:400 11px/13px 'Liberation Sans','Noto Sans CJK SC',sans-serif;color:#fff;transform:scaleX(1.248);">到位</div>
<div class="b led red" style="left:212.30px;top:498.50px;width:25.50px;height:20.40px;border-radius:4px;"></div>
<div class="t" style="left:252.83px;top:496.38px;font:400 11px/13px 'Liberation Sans','Noto Sans CJK SC',sans-serif;color:#fff;transform:scaleX(1.240);">急停</div>
<div class="t" style="left:252.99px;top:509.01px;font:400 11px/13px 'Liberation Sans','Noto Sans CJK SC',sans-serif;color:#fff;transform:scaleX(1.226);">报警</div>
<div class="b led grn" style="left:281.50px;top:498.50px;width:25.50px;height:20.40px;border-radius:4px;"></div>
<div class="t" style="left:183.69px;top:529.75px;font:400 11px/13px 'Liberation Sans','Noto Sans CJK SC',sans-serif;color:#fff;transform:scaleX(1.226);">后退</div>
<div class="t" style="left:182.73px;top:542.58px;font:400 11px/13px 'Liberation Sans','Noto Sans CJK SC',sans-serif;color:#fff;transform:scaleX(1.270);">限位</div>
<div class="b led grn" style="left:212.30px;top:532.00px;width:25.50px;height:20.40px;border-radius:4px;"></div>
<div class="t" style="left:252.68px;top:529.88px;font:400 11px/13px 'Liberation Sans','Noto Sans CJK SC',sans-serif;color:#fff;transform:scaleX(1.240);">前进</div>
<div class="t" style="left:252.03px;top:542.58px;font:400 11px/13px 'Liberation Sans','Noto Sans CJK SC',sans-serif;color:#fff;transform:scaleX(1.270);">限位</div>
<div class="b led grn" style="left:281.50px;top:532.00px;width:25.50px;height:20.40px;border-radius:4px;"></div>
<svg width="1218" height="680" viewBox="0 0 1218 680" style="left:0;top:0"><path d="M866.4 360.6H1058.5A3.5 3.5 0 0 1 1062 364.1V465.5A3.5 3.5 0 0 1 1058.5 469H783.6A3.5 3.5 0 0 1 780.1 465.5V364.1A3.5 3.5 0 0 1 783.6 360.6H787.8" fill="none" stroke="#dcdcdc" stroke-width="1.5"/></svg>
<svg width="1218" height="680" viewBox="0 0 1218 680" style="left:0;top:0"><path d="M866.4 482.2H1058.5A3.5 3.5 0 0 1 1062 485.7V585.3A3.5 3.5 0 0 1 1058.5 588.8H783.6A3.5 3.5 0 0 1 780.1 585.3V485.7A3.5 3.5 0 0 1 783.6 482.2H787.8" fill="none" stroke="#dcdcdc" stroke-width="1.5"/></svg>
<div class="t" style="left:788.72px;top:352.35px;font:400 13px/16px 'Liberation Sans','Noto Sans CJK SC',sans-serif;color:#fff;transform:scaleX(1.250);letter-spacing:1.57px;">主轴电机</div>
<div class="t" style="left:789.03px;top:474.15px;font:400 13px/16px 'Liberation Sans','Noto Sans CJK SC',sans-serif;color:#fff;transform:scaleX(1.250);letter-spacing:1.49px;">进给电机</div>
<div class="t" style="left:810.79px;top:379.38px;font:400 12.5px/15px 'Liberation Sans','Noto Sans CJK SC',sans-serif;color:#fff;transform:scaleX(1.134);">范围</div>
<div class="t" style="left:841.80px;top:379.77px;font:700 12px/14px 'Liberation Sans','Noto Sans CJK SC',sans-serif;color:#fff;transform:scaleX(1.600);">:</div>
<div class="t hw" style="left:807.47px;top:391.56px;font:400 12.5px/15px 'Noto Sans CJK SC','Liberation Mono',monospace;font-feature-settings:'hwid';color:#fff;transform:scaleX(1.201);">18-388</div>
<div class="b inp" style="left:855.70px;top:375.20px;width:104.30px;height:33.60px;"></div>
<div class="t" style="left:857.02px;top:380.84px;font:400 19.5px/23px 'Liberation Sans','Noto Sans CJK SC',sans-serif;color:#fff;transform:scaleX(1.175);">0</div>
<div class="t hw" style="left:965.76px;top:389.54px;font:400 11.5px/14px 'Noto Sans CJK SC','Liberation Mono',monospace;font-feature-settings:'hwid';color:#fff;transform:scaleX(1.578);">n/min</div>
<div class="b rb rbR" style="left:821.10px;top:414.20px;width:40.60px;height:31.80px;border-width:1.9px;"><svg width="40.00" height="30.00" viewBox="-20.00 -15.00 40.00 30.00" style="left:50%;top:50%;margin-left:-20.00px;margin-top:-15.00px"><path d="M-5.81 -6.34L7.57 0L-5.81 6.34z" fill="#fff"/></svg></div>
<div class="b rb rbL" style="left:952.90px;top:414.20px;width:40.60px;height:31.80px;border-width:1.9px;"><svg width="40.00" height="30.00" viewBox="-20.00 -15.00 40.00 30.00" style="left:50%;top:50%;margin-left:-20.00px;margin-top:-15.00px"><path d="M-8.98 -5.90L0.79 0L-8.98 5.90z" fill="#fff"/><path d="M0.79 -5.90L10.56 0L0.79 5.90z" fill="#fff"/></svg></div>
<div class="t" style="left:876.34px;top:435.17px;font:400 11.5px/14px 'Liberation Sans','Noto Sans CJK SC',sans-serif;color:#fff;transform:scaleX(1.320);">正转</div>
<div class="b rb rbR" style="left:816.30px;top:496.60px;width:36.40px;height:28.40px;border-width:1.9px;"><svg width="40.00" height="30.00" viewBox="-20.00 -15.00 40.00 30.00" style="left:50%;top:50%;margin-left:-20.00px;margin-top:-15.00px"><path d="M-3.4 0.4A5.1 5.1 0 1 1 -0.46 4.72" fill="none" stroke="#fff" stroke-width="2.8"/><path d="M-10.6 0.1L-2.3 0.4L-6.3 5.2z" fill="#fff"/></svg></div>
<div class="b " style="left:855.20px;top:494.30px;width:104.80px;height:33.70px;background:#000;"></div>
<div class="t" style="left:945.12px;top:496.59px;font:400 23.5px/28px 'Liberation Sans','Noto Sans CJK SC',sans-serif;color:#fff;transform:scaleX(0.949);-webkit-text-stroke:0.55px #fff;">0</div>
<div class="t hw" style="left:972.22px;top:513.15px;font:400 11px/13px 'Noto Sans CJK SC','Liberation Mono',monospace;font-feature-settings:'hwid';color:#fff;transform:scaleX(1.769);">mm</div>
<div class="b rb rbR" style="left:807.40px;top:533.90px;width:40.60px;height:31.80px;border-width:1.9px;"><svg width="40.00" height="30.00" viewBox="-20.00 -15.00 40.00 30.00" style="left:50%;top:50%;margin-left:-20.00px;margin-top:-15.00px"><path d="M8.98 -5.90L-0.79 0L8.98 5.90z" fill="#fff"/><path d="M-0.79 -5.90L-10.56 0L-0.79 5.90z" fill="#fff"/></svg></div>
<div class="b rb rbL" style="left:855.90px;top:533.90px;width:40.60px;height:31.80px;border-width:1.9px;"><svg width="40.00" height="30.00" viewBox="-20.00 -15.00 40.00 30.00" style="left:50%;top:50%;margin-left:-20.00px;margin-top:-15.00px"><path d="M6.34 -6.34L-7.22 0L6.34 6.34z" fill="#fff"/></svg></div>
<div class="b rb rbR" style="left:904.40px;top:533.90px;width:40.60px;height:31.80px;border-width:1.9px;"><svg width="40.00" height="30.00" viewBox="-20.00 -15.00 40.00 30.00" style="left:50%;top:50%;margin-left:-20.00px;margin-top:-15.00px"><path d="M-5.81 -6.34L7.57 0L-5.81 6.34z" fill="#fff"/></svg></div>
<div class="b rb rbL" style="left:952.90px;top:533.90px;width:40.60px;height:31.80px;border-width:1.9px;"><svg width="40.00" height="30.00" viewBox="-20.00 -15.00 40.00 30.00" style="left:50%;top:50%;margin-left:-20.00px;margin-top:-15.00px"><path d="M-8.98 -5.90L0.79 0L-8.98 5.90z" fill="#fff"/><path d="M0.79 -5.90L10.56 0L0.79 5.90z" fill="#fff"/></svg></div>
<div class="t" style="left:841.18px;top:568.21px;font:400 12px/14px 'Liberation Sans','Noto Sans CJK SC',sans-serif;color:#fff;transform:scaleX(1.311);">收缩</div>
<div class="t" style="left:917.52px;top:568.15px;font:400 12px/14px 'Liberation Sans','Noto Sans CJK SC',sans-serif;color:#fff;transform:scaleX(1.278);">涨紧</div>
<div class="t" style="left:770.60px;top:605.29px;font:600 13.5px/16px 'Liberation Serif','Noto Serif CJK SC',serif;color:#d60000;transform:scaleX(1.074);">宜昌利锐特精密机电设备有限公司</div>
</div></div>
</body></html>
